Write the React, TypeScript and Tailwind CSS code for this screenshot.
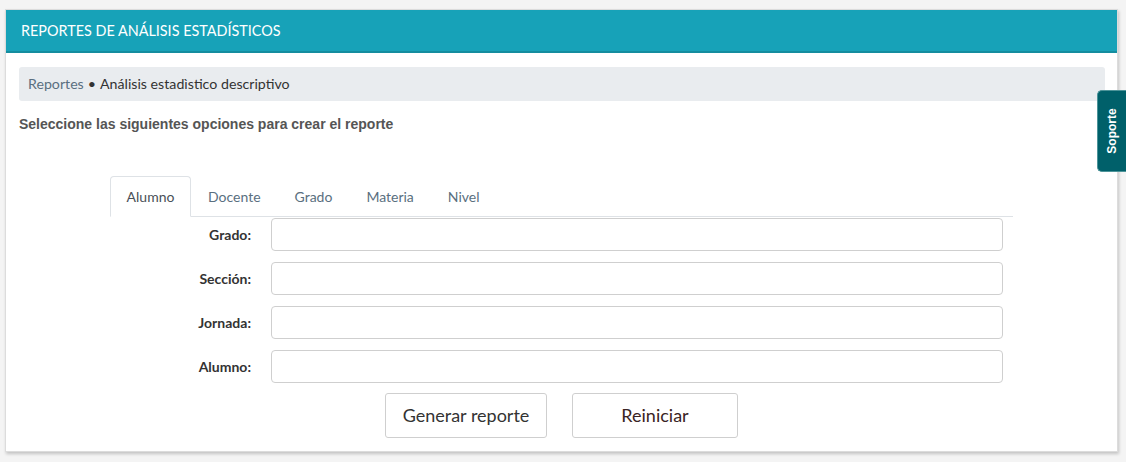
import React from "react";

const font = { fontFamily: "Lato, 'Open Sans', sans-serif" };

function Row({ label }: { label: string }) {
  return (
    <div className="flex items-center h-[33px]">
      <div className="w-[245px] text-right text-[14px] font-bold text-[#333]">{label}</div>
      <div className="w-[20px]" />
      <input className="w-[732px] h-[33px] border border-[#cfcfcf] rounded-[4px] bg-white outline-none" />
    </div>
  );
}

export default function App() {
  return (
    <div className="relative w-[1126px] h-[462px] bg-[#f4f4f4] overflow-hidden" style={font}>
      <div className="absolute left-[5px] top-[9px] w-[1113px] h-[443px] bg-white border border-[#dcdcdc] shadow-[1px_2px_3px_rgba(0,0,0,0.2)] flex flex-col">
        <div className="h-[43px] bg-[#17a2b8] border-b-2 border-[#148d9f] flex items-center pl-[15px] text-white text-[14.4px]">
          REPORTES DE ANÁLISIS ESTADÍSTICOS
        </div>
        <div className="px-[13px] pr-[12px]">
          <div className="mt-[14px] h-[34px] bg-[#e9ecef] rounded-[3px] flex items-center pl-[9px] text-[14.2px] text-[#333]">
            <span className="text-[#5a6f80]">Reportes</span>
            <span className="mx-[4px] text-[#333]">•</span>
            <span>Análisis estadìstico descriptivo</span>
          </div>
          <div
            className="mt-[14px] text-[14px] leading-[18px] font-bold text-[#555]"
            style={{ fontFamily: "'Liberation Sans', Arial, sans-serif" }}
          >
            Seleccione las siguientes opciones para crear el reporte
          </div>
        </div>
        <div className="mt-[43px] ml-[104px] w-[903px]">
          <div className="flex h-[41px] border-b border-[#dee2e6] text-[14px]">
            <div className="w-[81px] h-[41px] -mb-px border border-[#dee2e6] border-b-white bg-white rounded-t-[4px] flex items-center justify-center text-[#495057]">
              Alumno
            </div>
            <div className="px-[17px] flex items-center text-[#5a6f80]">Docente</div>
            <div className="px-[17px] flex items-center text-[#5a6f80]">Grado</div>
            <div className="px-[17px] flex items-center text-[#5a6f80]">Materia</div>
            <div className="px-[17px] flex items-center text-[#5a6f80]">Nivel</div>
          </div>
        </div>
        <div className="mt-[1px] flex flex-col gap-[11px]">
          <Row label="Grado:" />
          <Row label="Sección:" />
          <Row label="Jornada:" />
          <Row label="Alumno:" />
        </div>
        <div className="mt-[10px] flex gap-[25px] pl-[379px]">
          <button className="w-[162px] h-[45px] border border-[#cfcfcf] rounded-[3px] bg-white text-[18px] text-[#333]">
            Generar reporte
          </button>
          <button className="w-[166px] h-[45px] border border-[#cfcfcf] rounded-[3px] bg-white text-[18px] text-[#3a2424]">
            Reiniciar
          </button>
        </div>
      </div>
      <div className="absolute right-0 top-[90px] w-[29px] h-[82px] bg-[#00606a] border border-[#4d9499] border-r-0 rounded-l-[5px] flex items-center justify-center">
        <span
          className="-rotate-90 whitespace-nowrap text-white text-[12px] font-bold"
          style={{ fontFamily: "'Liberation Sans', Arial, sans-serif" }}
        >
          Soporte
        </span>
      </div>
    </div>
  );
}
